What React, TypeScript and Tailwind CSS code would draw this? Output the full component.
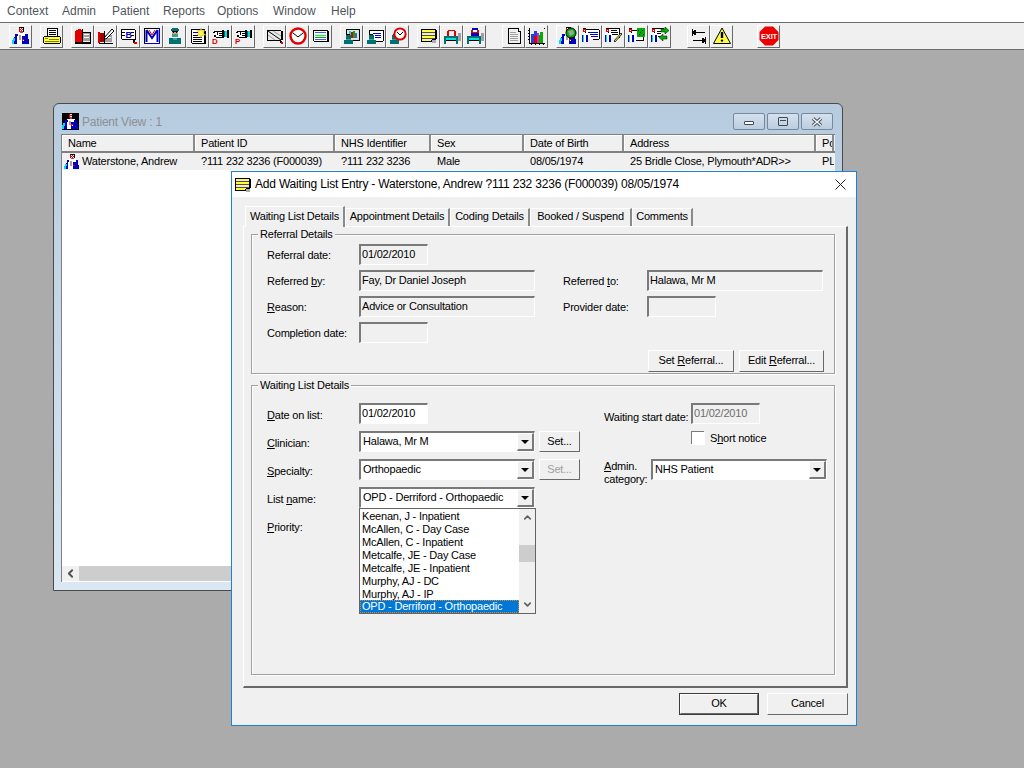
import type { ReactNode } from "react"
import { ChevronDown, ChevronLeft, ChevronUp } from "lucide-react"

type Box = [number, number, number, number, string]

function Px({ r, size = 18, children }: { r: Box[]; size?: number; children?: ReactNode }) {
  return (
    <svg width={size} height={size} viewBox="0 0 18 18" className="block shrink-0">
      <g shapeRendering="crispEdges">
        {r.map(([x, y, w, h, fill], i) => (
          <rect key={i} x={x} y={y} width={w} height={h} fill={fill} />
        ))}
      </g>
      {children}
    </svg>
  )
}

const K = "#000000"
const W = "#ffffff"
const RD = "#e00000"
const BL = "#0000c0"
const CY = "#00e0e0"
const YL = "#ffff40"
const GY = "#a0a0a0"
const TL = "#007070"
const GR = "#00b000"

const doctor: Box[] = [
  [7, 0, 5, 1, K], [7, 1, 1, 4, RD], [8, 1, 1, 1, W], [9, 1, 1, 1, RD], [10, 1, 1, 1, W], [11, 1, 1, 4, K],
  [8, 2, 1, 1, RD], [9, 2, 1, 1, W], [10, 2, 1, 1, RD], [8, 3, 1, 1, W], [9, 3, 1, 1, RD], [10, 3, 1, 1, W],
  [8, 4, 3, 2, "#c04040"], [5, 6, 9, 3, W], [3, 7, 3, 4, BL], [13, 7, 3, 5, BL], [2, 10, 3, 7, BL], [0, 13, 2, 4, CY],
  [1, 11, 2, 3, CY], [5, 9, 5, 8, W], [7, 8, 2, 5, GY], [10, 9, 3, 8, BL], [13, 12, 4, 5, BL], [10, 12, 2, 2, RD], [11, 13, 1, 1, W],
]
const smallDoctor: Box[] = [
  [1, 1, 3, 1, K], [1, 2, 3, 3, RD], [2, 3, 1, 1, W], [0, 6, 5, 2, W], [0, 8, 1, 7, BL], [1, 8, 1, 7, CY], [2, 6, 2, 9, W], [4, 8, 2, 7, BL],
]
const teal: Box[] = [
  [3, 8, 5, 4, TL], [4, 7, 3, 1, K], [1, 13, 9, 4, TL], [3, 12, 5, 1, "#40a0a0"],
]

const lineNote: Box[] = [
  [1, 2, 15, 1, K], [1, 3, 1, 11, K], [2, 3, 14, 11, YL], [2, 5, 14, 1, "#4040c0"], [2, 8, 14, 1, "#4040c0"],
  [2, 11, 14, 1, "#4040c0"], [15, 3, 2, 9, K], [12, 12, 4, 1, K], [11, 13, 2, 2, K], [12, 13, 4, 3, "#ababab"], [1, 14, 11, 1, K],
]

const hand = (letter: string) => (
  <Px
    r={[
      [2, 4, 8, 1, K], [1, 5, 2, 1, K], [3, 5, 7, 5, W], [2, 8, 2, 2, K], [5, 5, 1, 3, K], [7, 6, 3, 1, K],
      [7, 8, 3, 1, K], [4, 10, 6, 1, K], [10, 3, 2, 8, K], [12, 4, 3, 6, TL], [13, 4, 2, 6, CY], [15, 3, 2, 8, K],
    ]}
  >
    <text x="0" y="17" fontFamily="Liberation Sans" fontSize="8" fontWeight="700" fill={RD}>{letter}</text>
  </Px>
)

const bed = (top: Box[]) => (
  <Px
    r={[
      ...top, [2, 9, 12, 2, TL], [2, 11, 12, 2, CY], [1, 9, 2, 8, TL], [13, 9, 2, 8, TL], [3, 13, 10, 1, K], [15, 6, 3, 8, GY],
    ]}
  />
)

// one entry per toolbar button, split into the groups of the bar
const toolbarGroups: { gap: string; icons: ReactNode[] }[] = [
  { gap: "ml-[9px]", icons: [<Px r={doctor} />] },
  {
    gap: "ml-[8px]",
    icons: [
      <Px
        r={[
          [4, 1, 11, 1, K], [4, 2, 1, 7, K], [14, 2, 1, 7, K], [5, 2, 9, 7, W], [6, 3, 7, 1, K], [6, 5, 7, 1, K], [6, 7, 7, 1, K],
          [1, 9, 16, 1, K], [0, 10, 1, 6, K], [17, 10, 1, 6, K], [1, 10, 16, 6, YL], [2, 11, 3, 1, "#808000"], [6, 12, 10, 1, "#808000"], [2, 14, 14, 1, "#808000"], [1, 16, 16, 1, K],
        ]}
      />,
    ],
  },
  {
    gap: "ml-[8px]",
    icons: [
      <Px r={[[1, 4, 7, 11, RD], [2, 3, 6, 1, RD], [8, 2, 1, 14, K], [4, 2, 3, 1, RD], [9, 6, 7, 8, GY], [9, 5, 7, 1, K], [10, 7, 5, 1, W], [10, 10, 5, 1, W], [1, 15, 16, 2, K], [16, 5, 1, 10, K]]} />,
      <Px r={[[2, 6, 5, 9, "#a00000"], [1, 5, 2, 11, RD], [7, 4, 1, 13, K], [8, 8, 7, 7, GY], [8, 7, 7, 1, W], [9, 10, 5, 1, W], [2, 16, 14, 1, K]]}>
        <path d="M7 11 L15 2 L17 4 L9 12 Z" fill={W} stroke={K} strokeWidth="1" />
      </Px>,
      <Px r={[[1, 2, 14, 1, K], [1, 3, 1, 9, K], [2, 3, 13, 9, W], [2, 5, 3, 1, K], [2, 8, 3, 1, K], [11, 5, 3, 1, K], [11, 8, 3, 1, K], [2, 12, 13, 1, K], [15, 3, 1, 10, K], [13, 13, 2, 3, K], [14, 15, 3, 2, RD]]}>
        <text x="5.5" y="11" fontFamily="Liberation Sans" fontSize="9" fontWeight="700" fill={BL}>B</text>
      </Px>,
      <Px r={[[1, 1, 16, 1, K], [1, 1, 1, 16, K], [16, 1, 1, 16, BL], [1, 16, 16, 1, BL], [2, 2, 14, 14, W]]}>
        <path d="M3.5 15 L3.5 3 M3.5 3 L9 11 L14.5 3 M14.5 3 L14.5 15" fill="none" stroke={BL} strokeWidth="2" />
        <path d="M6 3 L9 8 L12 3" fill="none" stroke={RD} strokeWidth="1" />
      </Px>,
      <Px r={[[6, 1, 6, 3, TL], [5, 2, 8, 2, TL], [6, 4, 6, 1, K], [6, 5, 6, 3, "#d8a080"], [7, 5, 1, 1, K], [10, 5, 1, 1, K], [6, 7, 6, 3, "#40a090"], [3, 11, 12, 6, TL], [7, 11, 4, 2, "#40a090"]]} />,
      <Px r={[[2, 2, 14, 1, K], [2, 3, 1, 13, K], [3, 3, 12, 13, W], [15, 3, 1, 13, K], [16, 4, 1, 13, K], [3, 16, 14, 1, K], [4, 5, 5, 1, BL], [4, 8, 5, 1, K], [4, 10, 9, 1, K], [4, 12, 9, 1, K], [4, 14, 9, 1, K]]}>
        <path d="M12 1 L13 4 L16 3 L14 6 L17 8 L13 8 L12 11 L11 8 L8 8 L10 6 L8 3 L11 4 Z" fill={YL} stroke="#c0a000" strokeWidth="0.5" />
      </Px>,
      hand("D"),
      hand("P"),
    ],
  },
  {
    gap: "ml-[8px]",
    icons: [
      <Px r={[[1, 3, 14, 1, K], [1, 3, 1, 10, K], [2, 4, 13, 9, "#e8e8e8"], [15, 4, 2, 9, K], [1, 13, 14, 1, K], [14, 14, 2, 2, K], [15, 15, 2, 2, RD]]}>
        <path d="M2 4 L15 13" stroke={K} strokeWidth="1" fill="none" />
        <path d="M2 8 L9 13 M7 4 L15 9" stroke={GY} strokeWidth="1" fill="none" />
      </Px>,
      <svg width="18" height="18" viewBox="0 0 18 18" className="block shrink-0">
        <circle cx="9" cy="9" r="7.5" fill={W} stroke={RD} strokeWidth="2.4" />
        <path d="M4 6 L9 10 L14 6" fill="none" stroke={K} strokeWidth="1" />
      </svg>,
      <Px r={[[1, 3, 15, 1, K], [1, 4, 1, 10, K], [15, 4, 2, 11, K], [2, 14, 14, 1, K], [2, 4, 13, 10, W], [3, 5, 11, 1, "#4060e0"], [3, 7, 11, 1, YL], [3, 8, 11, 1, CY], [3, 10, 11, 1, GR], [3, 12, 11, 1, "#4060e0"]]} />,
    ],
  },
  {
    gap: "ml-[8px]",
    icons: [
      <Px r={[[3, 2, 14, 1, K], [3, 3, 1, 6, K], [16, 3, 1, 10, K], [4, 3, 12, 10, "#e0e0e0"], [6, 4, 2, 7, CY], [8, 5, 2, 6, RD], [10, 4, 2, 7, GR], [12, 6, 2, 5, "#4060e0"], [10, 13, 7, 1, K], ...teal]} />,
      <Px r={[[3, 3, 14, 1, K], [3, 4, 1, 5, K], [17, 3, 1, 11, K], [4, 4, 13, 10, W], [7, 6, 8, 1, BL], [9, 8, 6, 1, BL], [9, 10, 6, 1, BL], [10, 14, 7, 1, K], ...teal]} />,
      <Px r={[...teal]}>
        <circle cx="11" cy="7" r="5.6" fill={W} stroke={RD} strokeWidth="2" />
        <path d="M8 5 L11 8 L14 5" fill="none" stroke={K} strokeWidth="1" />
      </Px>,
    ],
  },
  {
    gap: "ml-[8px]",
    icons: [
      <Px r={lineNote} />,
      bed([[5, 3, 7, 1, RD], [4, 4, 2, 5, RD], [11, 4, 2, 5, RD]]),
      bed([[6, 1, 6, 2, BL], [5, 3, 8, 3, RD], [7, 3, 4, 2, W], [5, 6, 8, 3, BL]]),
    ],
  },
  {
    gap: "ml-[16px]",
    icons: [
      <Px r={[[3, 1, 10, 1, K], [3, 2, 1, 15, K], [4, 2, 9, 15, "#f0f0f0"], [13, 1, 1, 4, K], [14, 4, 2, 1, K], [15, 4, 1, 13, K], [3, 16, 13, 1, K], [5, 5, 6, 1, GY], [5, 7, 8, 1, GY], [5, 9, 8, 1, GY], [5, 11, 8, 1, GY], [5, 13, 8, 1, GY], [14, 5, 1, 11, "#f0f0f0"]]} />,
      <Px r={[[1, 1, 1, 15, K], [1, 16, 16, 1, K], [0, 3, 1, 1, K], [0, 6, 1, 1, K], [0, 9, 1, 1, K], [0, 12, 1, 1, K], [3, 17, 1, 1, K], [7, 17, 1, 1, K], [11, 17, 1, 1, K], [15, 17, 1, 1, K], [16, 1, 1, 1, K], [3, 7, 3, 9, "#2040e0"], [6, 4, 3, 12, "#2040e0"], [6, 9, 3, 7, RD], [9, 6, 2, 10, "#e020c0"], [11, 8, 1, 8, GR], [12, 5, 3, 11, GR]]} />,
    ],
  },
  {
    gap: "ml-[8px]",
    icons: [
      <Px r={doctor}>
        <circle cx="12" cy="6" r="5" fill={GR} stroke={K} strokeWidth="1" />
        <path d="M9 4 L14 3 L15 7 L11 9 Z" fill={GY} />
      </Px>,
      <Px r={[[3, 2, 14, 1, K], [3, 3, 1, 5, K], [4, 3, 13, 9, W], [17, 3, 1, 9, K], [6, 5, 10, 1, BL], [8, 7, 8, 1, BL], [9, 9, 7, 1, BL], [11, 12, 6, 1, K], ...smallDoctor]} />,
      <Px r={[[3, 1, 11, 1, K], [3, 2, 1, 6, K], [4, 2, 10, 9, W], [14, 1, 1, 10, K], [6, 3, 6, 1, K], [6, 5, 7, 1, K], [7, 7, 6, 1, K], ...smallDoctor]}>
        <path d="M9 14 L16 6 L17 7 L10 15 Z" fill={YL} stroke={K} strokeWidth="0.8" />
      </Px>,
      <Px r={[[3, 3, 13, 1, K], [3, 4, 1, 5, K], [4, 4, 11, 9, W], [15, 4, 1, 9, K], [8, 13, 8, 1, K], [9, 1, 8, 9, GR], [10, 3, 1, 1, K], [12, 5, 1, 1, K], [14, 3, 1, 1, K], [11, 7, 1, 1, K], [15, 7, 1, 1, K], ...smallDoctor]} />,
      <Px r={[[3, 1, 10, 1, K], [3, 2, 1, 6, K], [4, 2, 9, 11, W], [6, 4, 4, 1, K], [6, 6, 4, 1, K], [7, 9, 4, 1, K], ...smallDoctor]}>
        <path d="M10 2 H14 V0 L18 3.5 L14 7 V5 H10 Z M16 9 H12 V7 L8 10.5 L12 14 V12 H16 Z" fill={GR} stroke={K} strokeWidth="0.5" />
      </Px>,
    ],
  },
  {
    gap: "ml-[16px]",
    icons: [
      <Px r={[[2, 2, 1, 7, K], [3, 5, 12, 1, K], [3, 4, 3, 3, K], [4, 3, 2, 5, K], [15, 10, 1, 7, K], [3, 13, 12, 1, K], [12, 12, 3, 3, K], [12, 11, 2, 5, K]]} />,
      <svg width="18" height="18" viewBox="0 0 18 18" className="block shrink-0">
        <path d="M9 1 L17.5 16.5 H0.5 Z" fill={YL} stroke={K} strokeWidth="1" />
        <path d="M9 5 V11" stroke={K} strokeWidth="2.4" />
        <circle cx="9" cy="13.6" r="1.2" fill={K} />
      </svg>,
    ],
  },
  {
    gap: "ml-[24px]",
    icons: [
      <svg width="20" height="20" viewBox="0 0 20 20" className="block shrink-0">
        <path d="M6 0.5 H14 L19.5 6 V14 L14 19.5 H6 L0.5 14 V6 Z" fill="#ee0000" />
        <text x="10" y="13" textAnchor="middle" fontFamily="Liberation Sans" fontSize="7.5" fontWeight="700" fill={W}>EXIT</text>
      </svg>,
    ],
  },
]

const columns = [
  { label: "Name", w: "w-[133px]" },
  { label: "Patient ID", w: "w-[140px]" },
  { label: "NHS Identifier", w: "w-[96px]" },
  { label: "Sex", w: "w-[93px]" },
  { label: "Date of Birth", w: "w-[100px]" },
  { label: "Address", w: "w-[192px]" },
  { label: "Po", w: "w-[18px]" },
]

const rowCells = [
  { text: "?111 232 3236 (F000039)", w: "w-[140px]" },
  { text: "?111 232 3236", w: "w-[96px]" },
  { text: "Male", w: "w-[93px]" },
  { text: "08/05/1974", w: "w-[100px]" },
  { text: "25 Bridle Close, Plymouth*ADR>>", w: "w-[192px]" },
  { text: "PL", w: "w-[18px]" },
]

const menuItems = [
  { label: "Context", w: "w-[55px]" },
  { label: "Admin", w: "w-[50px]" },
  { label: "Patient", w: "w-[51px]" },
  { label: "Reports", w: "w-[54px]" },
  { label: "Options", w: "w-[56px]" },
  { label: "Window", w: "w-[58px]" },
  { label: "Help", w: "w-[40px]" },
]

const tabs = [
  { label: "Appointment Details", w: "w-[105px]" },
  { label: "Coding Details", w: "w-[80px]" },
  { label: "Booked / Suspend", w: "w-[102px]" },
  { label: "Comments", w: "w-[61px]" },
]

const listItems = [
  "Keenan, J - Inpatient",
  "McAllen, C - Day Case",
  "McAllen, C - Inpatient",
  "Metcalfe, JE - Day Case",
  "Metcalfe, JE - Inpatient",
  "Murphy, AJ - DC",
  "Murphy, AJ - IP",
]

function Field({ value, w, disabled }: { value?: string; w: string; disabled?: boolean }) {
  return (
    <div className={`${w} h-[21px] border-t-2 border-l-2 border-t-[#7a7a7a] border-l-[#7a7a7a] border-r border-b border-r-white border-b-white bg-[#f0f0f0] pl-[1px] leading-[16px] ${disabled ? "text-[#6d6d6d]" : "text-black"}`}>
      {value}
    </div>
  )
}

function InputField({ value, w }: { value: string; w: string }) {
  return (
    <div className={`${w} h-[21px] border-t-2 border-l-2 border-t-[#7a7a7a] border-l-[#7a7a7a] border-r border-b border-r-white border-b-white bg-white pl-[1px] leading-[16px]`}>
      {value}
    </div>
  )
}

function Combo({ value, w }: { value: string; w: string }) {
  return (
    <div className={`${w} flex h-[21px] border-t-2 border-l-2 border-t-[#7a7a7a] border-l-[#7a7a7a] border-r border-b border-r-white border-b-white bg-white`}>
      <div className="flex-1 truncate pl-[2px] leading-[16px]">{value}</div>
      <div className="flex w-[17px] items-center justify-center border-t border-l border-r-2 border-b-2 border-t-white border-l-white border-r-[#7a7a7a] border-b-[#7a7a7a] bg-[#f0f0f0]">
        <div className="h-0 w-0 border-x-[4px] border-t-[4px] border-x-transparent border-t-black" />
      </div>
    </div>
  )
}

function Btn({ children, w, h = "h-[22px]", disabled }: { children: ReactNode; w: string; h?: string; disabled?: boolean }) {
  return (
    <div className={`${w} ${h} flex items-center justify-center border border-t-white border-l-white border-r-[#696969] border-b-[#696969] bg-[#f0f0f0] ${disabled ? "text-[#a0a0a0]" : "text-black"}`}>
      {children}
    </div>
  )
}

function Group({ title, className, children }: { title: string; className: string; children: ReactNode }) {
  return (
    <div className={`relative w-[584px] border border-[#a0a0a0] shadow-[inset_1px_1px_0_#fff,1px_1px_0_#fff] ${className}`}>
      <span className="absolute left-[6px] top-[-7px] bg-[#f0f0f0] px-[2px] leading-[13px]">{title}</span>
      {children}
    </div>
  )
}

function Label({ children, className = "w-[92px]", leading = "leading-[24px]" }: { children: ReactNode; className?: string; leading?: string }) {
  return <div className={`${className} h-[24px] ${leading}`}>{children}</div>
}

export default function App() {
  return (
    <div className="relative h-[768px] w-[1024px] overflow-hidden bg-[#ababab] font-['Liberation_Sans',sans-serif] text-[11px] tracking-[-0.2px] text-black">
      <div className="flex h-[22px] items-center bg-white pl-[7px] text-[12px] tracking-normal text-[#50555c]">
        {menuItems.map((m) => (
          <div key={m.label} className={m.w}>{m.label}</div>
        ))}
      </div>

      <div className="flex h-[28px] items-center border-y border-t-[#6d6d6d] border-b-[#6d6d6d] bg-[#f0f0f0]">
        {toolbarGroups.map((group, g) => (
          <div key={g} className={`flex ${group.gap}`}>
            {group.icons.map((icon, i) => (
              <Btn key={i} w="w-[23px]" h="h-[23px]">{icon}</Btn>
            ))}
          </div>
        ))}
      </div>

      {/* Patient View window */}
      <div className="absolute left-[53px] top-[103px] flex h-[488px] w-[790px] flex-col rounded-t-[6px] border border-[#4a4a4a] bg-gradient-to-b from-[#b7cbdf] to-[#dbe7f3] px-[7px] pb-[8px]">
        <div className="flex h-[30px] items-center">
          <div className="ml-[1px] mt-[5px] bg-black"><Px r={doctor} size={17} /></div>
          <span className="ml-[3px] mt-[5px] text-[12px] text-[#8b9096]">Patient View : 1</span>
          <div className="ml-auto mr-[2px] mt-[5px] flex gap-[2px]">
            {[
              <div className="mt-[3px] h-[4px] w-[10px] rounded-[1px] border border-[#404850] bg-white" />,
              <div className="flex h-[9px] w-[10px] items-center justify-center rounded-[1px] border border-[#404850]"><div className="h-[3px] w-[6px] border-t border-[#404850]" /></div>,
              <svg width="12" height="10" viewBox="0 0 12 10">
                <path d="M2 1.5 L10 8.5 M10 1.5 L2 8.5" stroke="#404850" strokeWidth="3.4" />
                <path d="M2 1.5 L10 8.5 M10 1.5 L2 8.5" stroke="#f4f7fa" strokeWidth="1.6" />
              </svg>,
            ].map((glyph, i) => (
              <div key={i} className="flex h-[17px] w-[32px] items-center justify-center rounded-[2px] border border-[#76889b] bg-gradient-to-b from-[#d5e1ee] to-[#bccde0]">
                {glyph}
              </div>
            ))}
          </div>
        </div>

        <div className="flex flex-1 flex-col border-l border-t border-[#808080] bg-white">
          <div className="flex h-[18px] border-b-2 border-[#808080] bg-[#f0f0f0]">
            {columns.map((c) => (
              <div key={c.label} className={`${c.w} shrink-0 overflow-hidden whitespace-nowrap border-r-2 border-[#8a8a8a] pl-[6px] leading-[17px] shadow-[inset_1px_1px_0_#fff]`}>
                {c.label}
              </div>
            ))}
          </div>
          <div className="flex h-[17px] items-center bg-[#f0f0f0]">
            <div className="flex w-[133px] shrink-0 items-center pl-[2px]">
              <Px r={doctor} size={16} />
              <span className="ml-[2px]">Waterstone, Andrew</span>
            </div>
            {rowCells.map((c) => (
              <div key={c.text} className={`${c.w} shrink-0 overflow-hidden whitespace-nowrap pl-[6px]`}>{c.text}</div>
            ))}
          </div>
          <div className="flex-1" />
          <div className="mb-[1px] flex h-[15px] bg-[#cdcdcd]">
            <div className="flex w-[17px] items-center justify-center bg-[#f0f0f0] text-[#505050]">
              <ChevronLeft size={13} strokeWidth={3.5} />
            </div>
          </div>
        </div>
      </div>

      {/* Add Waiting List Entry dialog */}
      <div className="absolute left-[231px] top-[171px] h-[555px] w-[626px] border border-[#1c82d4] bg-[#f0f0f0]">
        <div className="flex h-[25px] items-center bg-white pl-[2px]">
          <Px r={lineNote} size={18} />
          <span className="mb-[1px] ml-[3px] text-[12px]">Add Waiting List Entry - Waterstone, Andrew ?111 232 3236 (F000039) 08/05/1974</span>
          <svg width="11" height="11" viewBox="0 0 11 11" className="ml-auto mr-[10px]">
            <path d="M0.5 0.5 L10.5 10.5 M10.5 0.5 L0.5 10.5" stroke="#222" strokeWidth="1" />
          </svg>
        </div>

        <div className="pl-[11px] pt-[8px]">
          <div className="relative z-10 flex h-[21px] items-end pl-[2px]">
            <div className="mb-[-1px] flex h-[21px] w-[100px] items-center justify-center border-t border-l border-r-2 border-t-white border-l-white border-r-[#8a8a8a] bg-[#f0f0f0] pb-[2px]">
              Waiting List Details
            </div>
            {tabs.map((t) => (
              <div key={t.label} className={`${t.w} flex h-[18px] items-center justify-center border-t border-l border-r-2 border-t-white border-l-white border-r-[#8a8a8a] pb-[2px]`}>
                {t.label}
              </div>
            ))}
          </div>

          <div className="h-[462px] w-[605px] border-t border-l border-r-2 border-b-2 border-t-white border-l-white border-r-[#696969] border-b-[#696969] pl-[7px] pt-[7px]">
            <Group title="Referral Details" className="h-[140px] pl-[15px] pt-[9px]">
              <div className="grid grid-cols-[92px_176px_28px_84px_176px] auto-rows-[26px]">
                <Label leading="leading-[22px]">Referral date:</Label>
                <div className="col-span-4"><Field value="01/02/2010" w="w-[69px]" /></div>
                <Label leading="leading-[22px]">Referred <u>b</u>y:</Label>
                <Field value="Fay, Dr Daniel Joseph" w="w-[176px]" />
                <div />
                <Label className="w-[84px]" leading="leading-[22px]">Referred <u>t</u>o:</Label>
                <Field value="Halawa, Mr M" w="w-[176px]" />
                <Label leading="leading-[22px]"><u>R</u>eason:</Label>
                <Field value="Advice or Consultation" w="w-[176px]" />
                <div />
                <Label className="w-[84px]" leading="leading-[22px]">Provider date:</Label>
                <Field w="w-[69px]" />
                <Label leading="leading-[22px]">Completion date:</Label>
                <div className="col-span-4"><Field w="w-[69px]" /></div>
              </div>
              <div className="mt-[2px] flex justify-end gap-[5px] pr-[10px]">
                <Btn w="w-[86px]"><span className="mb-[1px]">Set <u>R</u>eferral...</span></Btn>
                <Btn w="w-[85px]"><span className="mb-[1px]">Edit <u>R</u>eferral...</span></Btn>
              </div>
            </Group>

            <Group title="Waiting List Details" className="mt-[11px] flex h-[290px] pl-[15px] pt-[17px]">
              <div className="w-[337px]">
                <div className="flex h-[28px]">
                  <Label><u>D</u>ate on list:</Label>
                  <InputField value="01/02/2010" w="w-[69px]" />
                </div>
                <div className="flex h-[28px]">
                  <Label><u>C</u>linician:</Label>
                  <Combo value="Halawa, Mr M" w="w-[176px]" />
                  <div className="ml-[4px]"><Btn w="w-[41px]" h="h-[21px]"><span className="mb-[1px]">Set...</span></Btn></div>
                </div>
                <div className="flex h-[28px]">
                  <Label><u>S</u>pecialty:</Label>
                  <Combo value="Orthopaedic" w="w-[176px]" />
                  <div className="ml-[4px]"><Btn w="w-[41px]" h="h-[21px]" disabled><span className="mb-[1px]">Set...</span></Btn></div>
                </div>
                <div className="flex h-[28px]">
                  <Label>List <u>n</u>ame:</Label>
                  <div className="relative">
                    <Combo value="OPD - Derriford - Orthopaedic" w="w-[176px]" />
                    <div className="absolute left-0 top-[21px] z-20 flex h-[106px] w-[177px] border border-[#646464] bg-white">
                      <div className="flex-1 pt-[1px]">
                        {listItems.map((item) => (
                          <div key={item} className="h-[13px] whitespace-nowrap pl-[2px] leading-[13px]">{item}</div>
                        ))}
                        <div className="mt-[-1px] h-[13px] whitespace-nowrap border border-dotted border-[#e08a30] bg-[#0078d7] pl-[1px] leading-[11px] text-white">
                          OPD - Derriford - Orthopaedic
                        </div>
                      </div>
                      <div className="flex w-[16px] flex-col bg-[#f0f0f0] text-[#606060]">
                        <div className="flex h-[17px] items-center justify-center"><ChevronUp size={11} strokeWidth={3.5} /></div>
                        <div className="mt-[19px] h-[17px] bg-[#cdcdcd]" />
                        <div className="mt-auto flex h-[17px] items-center justify-center"><ChevronDown size={11} strokeWidth={3.5} /></div>
                      </div>
                    </div>
                  </div>
                </div>
                <Label><u>P</u>riority:</Label>
              </div>

              <div>
                <div className="flex h-[28px]">
                  <div className="h-[24px] w-[87px] whitespace-nowrap leading-[28px]">Waiting start date:</div>
                  <Field value="01/02/2010" w="w-[69px]" disabled />
                </div>
                <div className="flex h-[28px] pl-[87px]">
                  <div className="h-[13px] w-[13px] border-t border-l border-[#7a7a7a] bg-white shadow-[1px_1px_0_#fff]" />
                  <span className="ml-[6px] leading-[14px]">S<u>h</u>ort notice</span>
                </div>
                <div className="flex">
                  <div className="w-[47px] pt-[1px] leading-[13px]"><u>A</u>dmin.<br />category:</div>
                  <Combo value="NHS Patient" w="w-[176px]" />
                </div>
              </div>
            </Group>
          </div>

          <div className="mt-[5px] flex w-[605px] justify-end gap-[8px]">
            <div className="border border-[#3c3c3c]">
              <Btn w="w-[78px]" h="h-[20px]"><span className="mb-[1px]">OK</span></Btn>
            </div>
            <Btn w="w-[81px]"><span className="mb-[1px]">Cancel</span></Btn>
          </div>
        </div>
      </div>
    </div>
  )
}
